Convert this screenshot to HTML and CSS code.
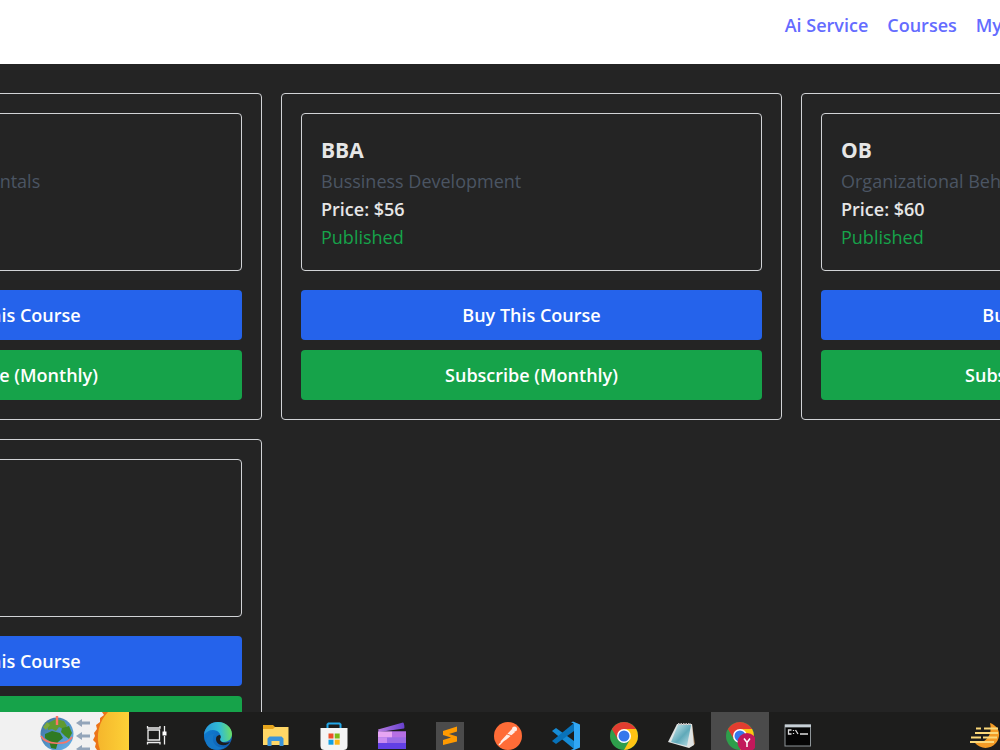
FILE: index.html
```html
<!DOCTYPE html>
<html lang="en">
<head>
<meta charset="utf-8">
<title>Courses</title>
<link rel="stylesheet" href="styles.css">
</head>
<body>
<div class="screen">
  <header class="navbar">
    <nav class="nav-links">
      <a href="#ai">Ai Service</a>
      <a href="#courses">Courses</a>
      <a href="#my">My</a>
    </nav>
  </header>

  <main class="content">
    <div class="course-grid">
      <article class="card">
        <div class="course-info">
          <h2 class="title">CS</h2>
          <p class="description">Programming Fundamentals</p>
          <p class="price">Price: $50</p>
          <p class="status">Published</p>
        </div>
        <div class="actions">
          <button class="btn buy" type="button">Buy This Course</button>
          <button class="btn subscribe" type="button">Subscribe (Monthly)</button>
        </div>
      </article>
      <article class="card">
        <div class="course-info">
          <h2 class="title">BBA</h2>
          <p class="description">Bussiness Development</p>
          <p class="price">Price: $56</p>
          <p class="status">Published</p>
        </div>
        <div class="actions">
          <button class="btn buy" type="button">Buy This Course</button>
          <button class="btn subscribe" type="button">Subscribe (Monthly)</button>
        </div>
      </article>
      <article class="card">
        <div class="course-info">
          <h2 class="title">OB</h2>
          <p class="description">Organizational Behavior</p>
          <p class="price">Price: $60</p>
          <p class="status">Published</p>
        </div>
        <div class="actions">
          <button class="btn buy" type="button">Buy This Course</button>
          <button class="btn subscribe" type="button">Subscribe (Monthly)</button>
        </div>
      </article>
      <article class="card">
        <div class="course-info">
          <h2 class="title">FN</h2>
          <p class="description">Introduction to Finance</p>
          <p class="price">Price: $40</p>
          <p class="status">Published</p>
        </div>
        <div class="actions">
          <button class="btn buy" type="button">Buy This Course</button>
          <button class="btn subscribe" type="button">Subscribe (Monthly)</button>
        </div>
      </article>
    </div>
  </main>

  <footer class="taskbar">
    <button class="widget" type="button" aria-label="Search highlights">
      <svg width="129" height="38" viewBox="0 0 129 38">
        <defs>
          <linearGradient id="sea" x1="0" y1="0" x2="1" y2="1"><stop offset="0" stop-color="#3c6f9c"/><stop offset="1" stop-color="#68b4ee"/></linearGradient>
          <linearGradient id="sun" x1="0" y1="0" x2="1" y2="0"><stop offset="0" stop-color="#f5b62c"/><stop offset="1" stop-color="#fdd237"/></linearGradient>
        </defs>
        <circle cx="57" cy="22" r="16.500" fill="url(#sea)"/>
        <path d="M48 11l8-4 8 2 3 5-4 3-4-2-3 4-4-2-4 1z" fill="#5f9a30"/>
        <path d="M45 22l7-3 8 2 3 5-5 4-2 7-5-1-2-7-4-3z" fill="#2f7a22"/>
        <path d="M62 16l7-2 3 7-3 6-4-3-4-4z" fill="#3f8a25"/>
        <path d="M43 15l4-5 3 3-4 5z" fill="#7aa83c"/>
        <path d="M57 4v9" stroke="#ff7464" stroke-width="2.400"/>
        <path d="M41 24c5 9 26 10 31 1" fill="none" stroke="#f4776a" stroke-width="1.600"/>
        <path id="arrow" d="M76 11l6-4v2.600h8v2.800h-8v2.600z" fill="#93a5ba"/>
        <use href="#arrow" y="13"/><use href="#arrow" y="26"/>
        <path d="M129 0h-27l2 3-4 3 0 4-4 3 1 4-3 4 1 3-2 4 3 3-1 4 2 3h32z" fill="#ec7418"/>
        <path d="M129 0h-21c-9 9-13 24-8 38h29z" fill="url(#sun)"/>
      </svg>
    </button>
    <div class="apps">
      <button class="app" type="button" aria-label="Task view">
        <svg viewBox="0 0 30 30"><g fill="none" stroke="#eee" stroke-width="1.300"><path d="M3 9h11.500v10H3zM2.500 5v2h12.500V5M2.500 23.500v-2h12.500v2M19.500 5v6M19.500 15v8.500"/></g><path d="M17.500 10.500h4v4h-4z" fill="#fff"/></svg>
      </button>
      <button class="app" type="button" aria-label="Edge">
        <svg viewBox="0 0 30 30">
          <defs><linearGradient id="e1" x1="0" y1=".4" x2="1" y2=".3"><stop offset="0" stop-color="#2695dc"/><stop offset=".55" stop-color="#32bcd5"/><stop offset="1" stop-color="#70e05c"/></linearGradient>
          <linearGradient id="e2" x1="0" y1="0" x2="1" y2="1"><stop offset="0" stop-color="#0d83da"/><stop offset="1" stop-color="#1257a7"/></linearGradient></defs>
          <circle cx="15" cy="15" r="14" fill="url(#e2)"/>
          <path d="M1 14C2 5 8 1 15 1c8 0 14 6 14 12 0 5-4 8-8 8-3 0-5-1-4-3 2-5-2-9-7-9-4 0-7 2-9 5z" fill="url(#e1)"/>
          <path d="M13 18c0-3 2-4 4-4 1 1 1 3 0 4 0 3 4 5 10 3l-2 2c-6 3-12 0-12-5z" fill="#1d1d1d"/>
          <path d="M10 17c-1 6 5 11 12 9-5 4-14 4-18-2-3-6 2-12 8-11-2 1-2 2-2 4z" fill="#1477c7"/>
        </svg>
      </button>
      <button class="app" type="button" aria-label="File Explorer">
        <svg viewBox="0 0 30 30"><path d="M2 4h10l2 2h13v18H2z" fill="#e6a51d"/><path d="M2 8h10l2-2h13.500v18H2z" fill="#ffd766"/><path d="M6.500 25V17.500l2-2h12l2 2V25h-4v-5h-8v5z" fill="#3b94da"/></svg>
      </button>
      <button class="app" type="button" aria-label="Microsoft Store">
        <svg viewBox="0 0 30 30"><path d="M8.500 8V3.500l1-1h11l1 1V8" fill="none" stroke="#22a7e8" stroke-width="2"/><path d="M1.500 7h27v18c0 3-2 4-4 4h-19c-2 0-4-1-4-4z" fill="#f4f4f4"/><path d="M9.500 12.500h5v5h-5z" fill="#ef5029"/><path d="M15.700 12.500h5v5h-5z" fill="#7eba16"/><path d="M9.500 18.700h5v5h-5z" fill="#129fe2"/><path d="M15.700 18.700h5v5h-5z" fill="#fcb514"/></svg>
      </button>
      <button class="app" type="button" aria-label="Clipchamp">
        <svg viewBox="0 0 30 30"><defs><linearGradient id="c1"><stop stop-color="#b87ce0"/><stop offset="1" stop-color="#6741cf"/></linearGradient></defs><path d="M1 8.500L26 1.500c1 0 2 5 1 6L2 11z" fill="url(#c1)"/><path d="M1 10.500h28V22H1z" fill="#9b6ae5"/><path d="M1 10.500h14v5.800H1z" fill="#e7a5f3"/><path d="M15 10.500h14v5.800H15z" fill="#b66fe4"/><path d="M1 16.300h9V22H1z" fill="#c98bf0"/><path d="M1 22h28v6H1z" fill="#6240e5"/></svg>
      </button>
      <button class="app" type="button" aria-label="Sublime Text">
        <svg viewBox="0 0 30 30"><path d="M1 1h28v28H1z" fill="#4b4b4b"/><path d="M22 5.500v5l-8 2.500 8 2.500v5L8 24v-5l8-2.500-8-2.500V10z" fill="#ff9a00"/></svg>
      </button>
      <button class="app" type="button" aria-label="Postman">
        <svg viewBox="0 0 30 30"><circle cx="15" cy="15" r="14" fill="#ff6c37"/><path d="M8 21l11-12 2 2-8 7zM6 24l5-5" fill="#ffece5" stroke="#ffece5" stroke-width="1.500"/><circle cx="21.500" cy="8" r="2.500" fill="#ffece5"/><path d="M14 13l5 2" stroke="#ff6c37"/></svg>
      </button>
      <button class="app" type="button" aria-label="Visual Studio Code">
        <svg viewBox="0 0 30 30"><path d="M1 10l4-3 18 13v8z" fill="#168bd5"/><path d="M1 20l4 3L23 10V2z" fill="#0872b9"/><path d="M20 1.500l2-1 7 3v23l-7 3-2-1c2 0 3-1 3-2v-23c0-1-1-2-3-2z" fill="#31a7f5"/></svg>
      </button>
      <button class="app" type="button" aria-label="Chrome">
        <svg viewBox="0 0 30 30"><g id="chrome"><circle cx="15" cy="15" r="14" fill="#2e9e4b"/><path d="M15 15L2.900 8A14 14 0 0 1 27.100 8H15z" fill="#e23d30"/><path d="M15 8h12.100A14 14 0 0 1 15 29l6-10.500z" fill="#ffc413"/><path d="M2.900 8L9 18.500 15 8z" fill="#e23d30"/><circle cx="15" cy="15" r="7" fill="#fff"/><circle cx="15" cy="15" r="5.500" fill="#3678ec"/></g></svg>
      </button>
      <button class="app" type="button" aria-label="Notepad">
        <svg viewBox="0 0 30 30"><defs><linearGradient id="n1" x1="0" y1="0" x2="1" y2="1"><stop stop-color="#d5edf0"/><stop offset=".55" stop-color="#5fa9b9"/><stop offset="1" stop-color="#bfe1e8"/></linearGradient></defs><path d="M25 3l3 20-6 4z" fill="#997450"/><path d="M1 21L10 3h15l2 21-5 3z" fill="#dfe4e4"/><path d="M4 21L11 4h13l-4 21z" fill="url(#n1)"/><path d="M11 3h13" stroke="#bcbcbc" stroke-width="2" stroke-dasharray="1.500 1"/></svg>
      </button>
      <button class="app active" type="button" aria-label="Chrome, profile Y">
        <svg viewBox="0 0 30 30"><use href="#chrome"/><circle cx="22" cy="21.500" r="9.500" fill="#c2185b"/><path d="M19 17.500l3 4 3-4M22 21.500v4.500" fill="none" stroke="#fff" stroke-width="1.500"/></svg>
      </button>
      <button class="app" type="button" aria-label="Command Prompt">
        <svg viewBox="0 0 30 30"><path d="M1.500 3.500h26.500v22H1.500z" fill="#8e9598"/><path d="M2.500 6.500h24.500v18H2.500z" fill="#050505"/><path d="M2 3.500h26v2.500H2z" fill="#c7d0d6"/><path d="M8.500 9H5.500v4h3M10.500 9v1M10.500 12v1M12.500 9l2.500 4M17 13h8" fill="none" stroke="#ddd" stroke-width="1.300"/></svg>
      </button>
    </div>
    <button class="tray" type="button" aria-label="Weather">
      <svg viewBox="0 0 30 30"><path d="M20 2c9 3 12 12 6 20-6 7-16 6-21 0 10 1 18-7 15-20z" fill="#f49b25"/><path d="M6 7.500h5M14 7.500h14M5 12h23M1 16.500h10M13 16.500h14M0 21h24" stroke="#fbd879" stroke-width="1.800"/></svg>
    </button>
  </footer>
</div>
</body>
</html>
```
FILE: styles.css
```css
* { box-sizing: border-box; }

body {
  margin: 0;
  background: #242424;
  color: #e6e6e6;
  font: 18px/28px "Open Sans", "Noto Sans", sans-serif;
}

button {
  border: 0;
  padding: 0;
  font: inherit;
  cursor: pointer;
}

.screen {
  display: flex;
  flex-direction: column;
  height: 100vh;
  overflow: hidden;
}

.navbar {
  flex: none;
  background: #fff;
  padding: 11px 0 25px;
}

.nav-links {
  display: flex;
  justify-content: flex-end;
  gap: 19px;
  margin-right: -2px;
}

.nav-links a {
  color: #646cff;
  font-weight: 600;
  text-decoration: none;
}

.content {
  flex: 1;
  min-height: 0;
  overflow: hidden;
  padding-top: 29px;
}

/* The three columns run past both sides of the window. */
.course-grid {
  display: grid;
  grid-template-columns: repeat(3, 1fr);
  gap: 19px;
  margin: 0 -302px 0 -239px;
}

.card {
  border: 1px solid #d1d3d6;
  border-radius: 4px;
  padding: 19px;
}

.course-info {
  border: 1px solid #d1d3d6;
  border-radius: 4px;
  padding: 19px;
}

.title {
  margin: 0;
  font-size: 21px;
  line-height: 34px;
  font-weight: 700;
}

.description,
.price,
.status { margin: 0; }

.description { color: #4b5563; }
.price { font-weight: 600; }
.status { color: #16a34a; }

.actions {
  display: flex;
  flex-direction: column;
  gap: 10px;
  margin-top: 19px;
}

.btn {
  height: 50px;
  border-radius: 4px;
  color: #fff;
  font-weight: 600;
}

.buy { background: #2563eb; }
.subscribe { background: #16a34a; }

.taskbar {
  flex: none;
  display: flex;
  height: 38px;
  background: #1d1d1c;
  overflow: hidden;
}

.widget {
  flex: none;
  background: #f1f1f1;
}

.widget svg { display: block; }

.apps {
  display: flex;
  flex: 1;
  padding-left: 2px;
}

.app,
.tray {
  display: flex;
  justify-content: center;
  flex: none;
  width: 58px;
  padding-top: 9px;
  background: transparent;
}

.tray { width: 30px; }
.app.active { background: #4b4b4b; }

.app svg,
.tray svg {
  flex: none;
  width: 30px;
  height: 30px;
}
```
